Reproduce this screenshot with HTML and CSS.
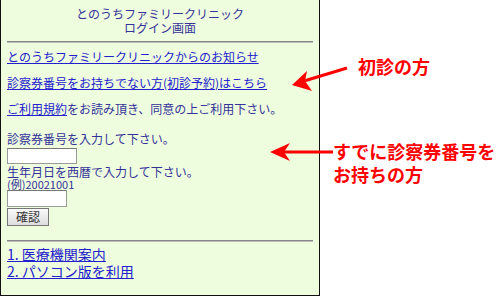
FILE: index.html
```html
<!DOCTYPE html>
<html lang="ja">
    <head>
        <title>とのうちファミリークリニック ログイン画面</title>
        <meta charset="utf-8">
        <link rel="stylesheet" href="styles.css">
    </head>
    <body>
        <div class="page">
            <div class="panel">
                <h1 class="title">とのうちファミリークリニック<br>ログイン画面</h1>
                <hr>
                <p><a href="#">とのうちファミリークリニックからのお知らせ</a></p>
                <p><a href="#">診察券番号をお持ちでない方(初診予約)はこちら</a></p>
                <p><a href="#">ご利用規約</a>をお読み頂き、同意の上ご利用下さい。</p>

                <form class="login" autocomplete="off">
                    <span>診察券番号を入力して下さい。</span>
                    <input class="card-no" type="text">
                    <span>生年月日を西暦で入力して下さい。</span>
                    <span class="example">(例)20021001</span>
                    <input class="birth" type="text">
                    <button type="button">確認</button>
                </form>

                <hr class="lower">
                <ul class="menu">
                    <li><a href="#">1. 医療機関案内</a></li>
                    <li><a href="#">2. パソコン版を利用</a></li>
                </ul>
            </div>

            <div class="notes">
                <div class="note first">初診の方</div>
                <div class="note second">すでに診察券番号を<br>お持ちの方</div>
            </div>

            <svg class="arrows" width="500" height="297" viewBox="0 0 500 297">
                <line x1="347" y1="68" x2="304" y2="81" stroke="#f00" stroke-width="3"/>
                <polygon points="292,85 312,91 305,81 307,71" fill="#f00"/>
                <line x1="333" y1="152" x2="284" y2="152" stroke="#f00" stroke-width="3"/>
                <polygon points="270,152 290,143 284,152 290,161" fill="#f00"/>
            </svg>
        </div>
    </body>
</html>
```

FILE: styles.css
```css
* {
    box-sizing: border-box;
    margin: 0;
    padding: 0;
}

html {
    background: #FFF;
    color: #333399;
    font-family: "Noto Sans CJK JP", "Noto Sans", sans-serif;
    font-size: 12px;
}

.page {
    position: relative;
    display: flex;
    width: 500px;
    height: 297px;
}

.panel {
    width: 320px;
    height: 296px;
    padding: 7px 6px 0 6px;
    background: #EFFDDF;
    border: 1px solid #111;
    border-top: none;
    line-height: 14px;
}

.title {
    font-size: 12px;
    font-weight: normal;
    line-height: 14px;
    text-align: center;
}

hr {
    margin: 6px 0 7px 0;
    border: none;
    border-top: 1px solid #888;
    border-bottom: 1px solid #BBB;
}

a {
    color: #2222CC;
}

p {
    margin-bottom: 12px;
}

.login {
    display: flex;
    flex-direction: column;
    align-items: flex-start;
    margin-top: 16px;
}

.login input {
    height: 16px;
    margin: 2px 0 1px 0;
    border: 1px solid #999;
    border-top-color: #777;
    background: #FFF;
}

.card-no {
    width: 70px;
}

.example {
    margin-top: -1px;
    font-size: 11px;
    line-height: 12px;
}

.login .birth {
    width: 60px;
    height: 17px;
    margin-top: 0;
}

button {
    width: 42px;
    height: 18px;
    border: 1px solid #777;
    background: linear-gradient(#FAFAFA, #DDD);
    color: #333;
    font-family: inherit;
    font-size: 12px;
    line-height: 14px;
}

hr.lower {
    margin: 14px 0 4px 0;
}

.menu {
    list-style: none;
    font-size: 14px;
    line-height: 17px;
}

.notes {
    position: relative;
    flex: 1;
}

.note {
    position: absolute;
    color: #F00;
    font-size: 18px;
    font-weight: bold;
    line-height: 24px;
}

.note.first {
    left: 38px;
    top: 54px;
}

.note.second {
    left: 13px;
    top: 140px;
    line-height: 23px;
}

.arrows {
    position: absolute;
    left: 0;
    top: 0;
    pointer-events: none;
}
```
